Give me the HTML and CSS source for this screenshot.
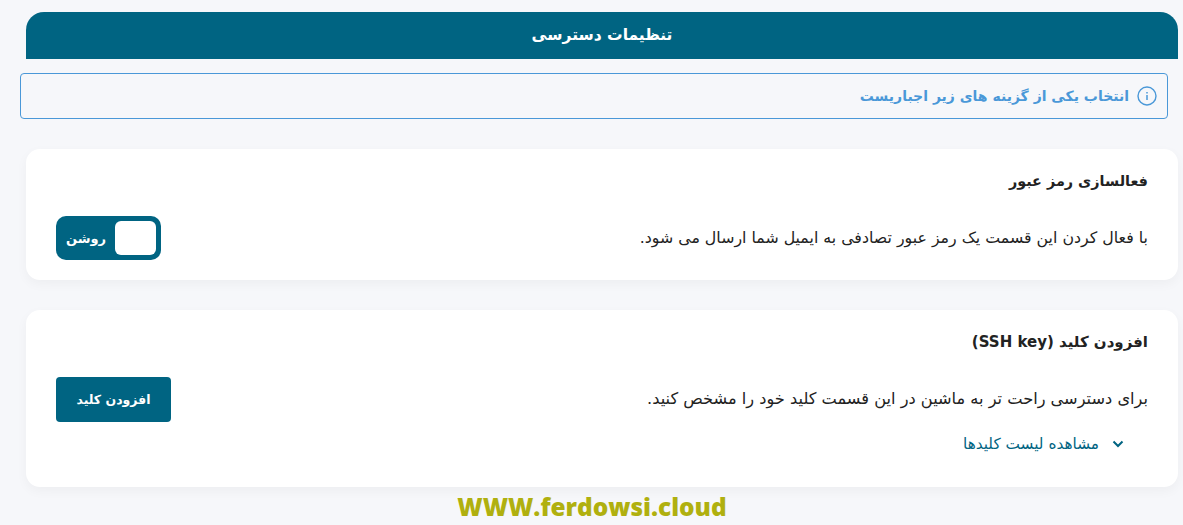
FILE: index.html
```html
<!DOCTYPE html>
<html lang="fa" dir="rtl">
<head>
  <meta charset="UTF-8">
  <meta name="viewport" content="width=device-width, initial-scale=1.0">
  <title>تنظیمات دسترسی</title>
  <link rel="stylesheet" href="styles.css">
</head>
<body>
  <div class="page">
    <h2 class="page-title">تنظیمات دسترسی</h2>

    <div class="alert">
      <svg class="alert-icon" viewBox="0 0 20 20" width="20" height="20" fill="none" stroke="currentColor">
        <circle cx="10" cy="10" r="9" stroke-width="1.4"/>
        <path d="M10 9v5" stroke-width="1.5"/>
        <path d="M10 6v1.4" stroke-width="1.5"/>
      </svg>
      <span>انتخاب یکی از گزینه های زیر اجباریست</span>
    </div>

    <div class="card card-password">
      <h3 class="card-title">فعالسازی رمز عبور</h3>
      <div class="card-row">
        <p class="card-text">با فعال کردن این قسمت یک رمز عبور تصادفی به ایمیل شما ارسال می شود.</p>
        <div class="toggle">
          <span class="toggle-knob"></span>
          <span class="toggle-label">روشن</span>
        </div>
      </div>
    </div>

    <div class="card card-ssh">
      <h3 class="card-title">افزودن کلید (SSH key)</h3>
      <div class="card-row">
        <p class="card-text">برای دسترسی راحت تر به ماشین در این قسمت کلید خود را مشخص کنید.</p>
        <button class="btn" type="button">افزودن کلید</button>
      </div>
      <a class="key-link" href="#">
        <svg viewBox="0 0 12 12" width="12" height="12" fill="none" stroke="currentColor" stroke-width="2">
          <path d="M1.5 3.5L6 8l4.500-4.500"/>
        </svg>
        <span>مشاهده لیست کلیدها</span>
      </a>
    </div>

    <div class="watermark" dir="ltr">WWW.ferdowsi.cloud</div>
  </div>
</body>
</html>
```

FILE: styles.css
```css
* {
  box-sizing: border-box;
}
html, body {
  height: 100%;
}
body {
  margin: 0;
  background-color: #f6f7fa;
  color: #222;
  font-family: "DejaVu Sans", sans-serif;
  overflow: hidden;
}
.page {
  padding: 12px 5px 0 26px;
}
.page-title {
  height: 47px;
  margin: 0;
  background-color: #006482;
  border-radius: 18px 18px 0 0;
  color: #fff;
  font-size: 15.5px;
  font-weight: bold;
  line-height: 47px;
  text-align: center;
}
.alert {
  display: flex;
  align-items: center;
  gap: 8px;
  height: 46px;
  margin: 14px 10px 30px -6px;
  padding: 0 10px;
  border: 1px solid #4a98d8;
  border-radius: 4px;
  color: #4a98d8;
  font-size: 14px;
  font-weight: bold;
}
.card {
  background-color: #fff;
  border-radius: 14px;
  box-shadow: 0 4px 12px rgba(0, 0, 0, 0.04);
  padding: 22px 30px 0;
}
.card-password {
  height: 131px;
  margin-bottom: 30px;
}
.card-ssh {
  height: 177px;
}
.card-title {
  margin: 0;
  font-size: 14.4px;
  font-weight: bold;
  line-height: 20px;
}
.card-ssh .card-title {
  font-size: 15px;
}
.card-row {
  display: flex;
  justify-content: space-between;
  align-items: center;
  margin-top: 25px;
}
.card-text {
  margin: 0 0 2px;
  font-size: 15.8px;
}
.card-ssh .card-text {
  font-size: 16.2px;
}
.toggle {
  display: flex;
  align-items: center;
  gap: 9px;
  width: 105px;
  height: 44px;
  padding: 0 5px;
  background-color: #006482;
  border-radius: 10px;
  color: #fff;
  font-size: 13px;
  font-weight: bold;
}
.toggle-knob {
  width: 41px;
  height: 34px;
  background-color: #fff;
  border-radius: 6px;
}
.btn {
  width: 115px;
  height: 45px;
  background-color: #006482;
  border: none;
  border-radius: 4px;
  color: #fff;
  font-family: inherit;
  font-size: 12.5px;
  font-weight: bold;
  cursor: pointer;
}
.key-link {
  display: flex;
  align-items: center;
  gap: 13px;
  margin: 13px 24px 0 0;
  color: #006482;
  font-size: 15.3px;
  text-decoration: none;
}
.watermark {
  margin-top: 5px;
  padding-right: 20px;
  color: #b0b00f;
  font-family: "Open Sans", sans-serif;
  font-size: 24.4px;
  font-weight: 800;
  line-height: 30px;
  text-align: center;
}
```
